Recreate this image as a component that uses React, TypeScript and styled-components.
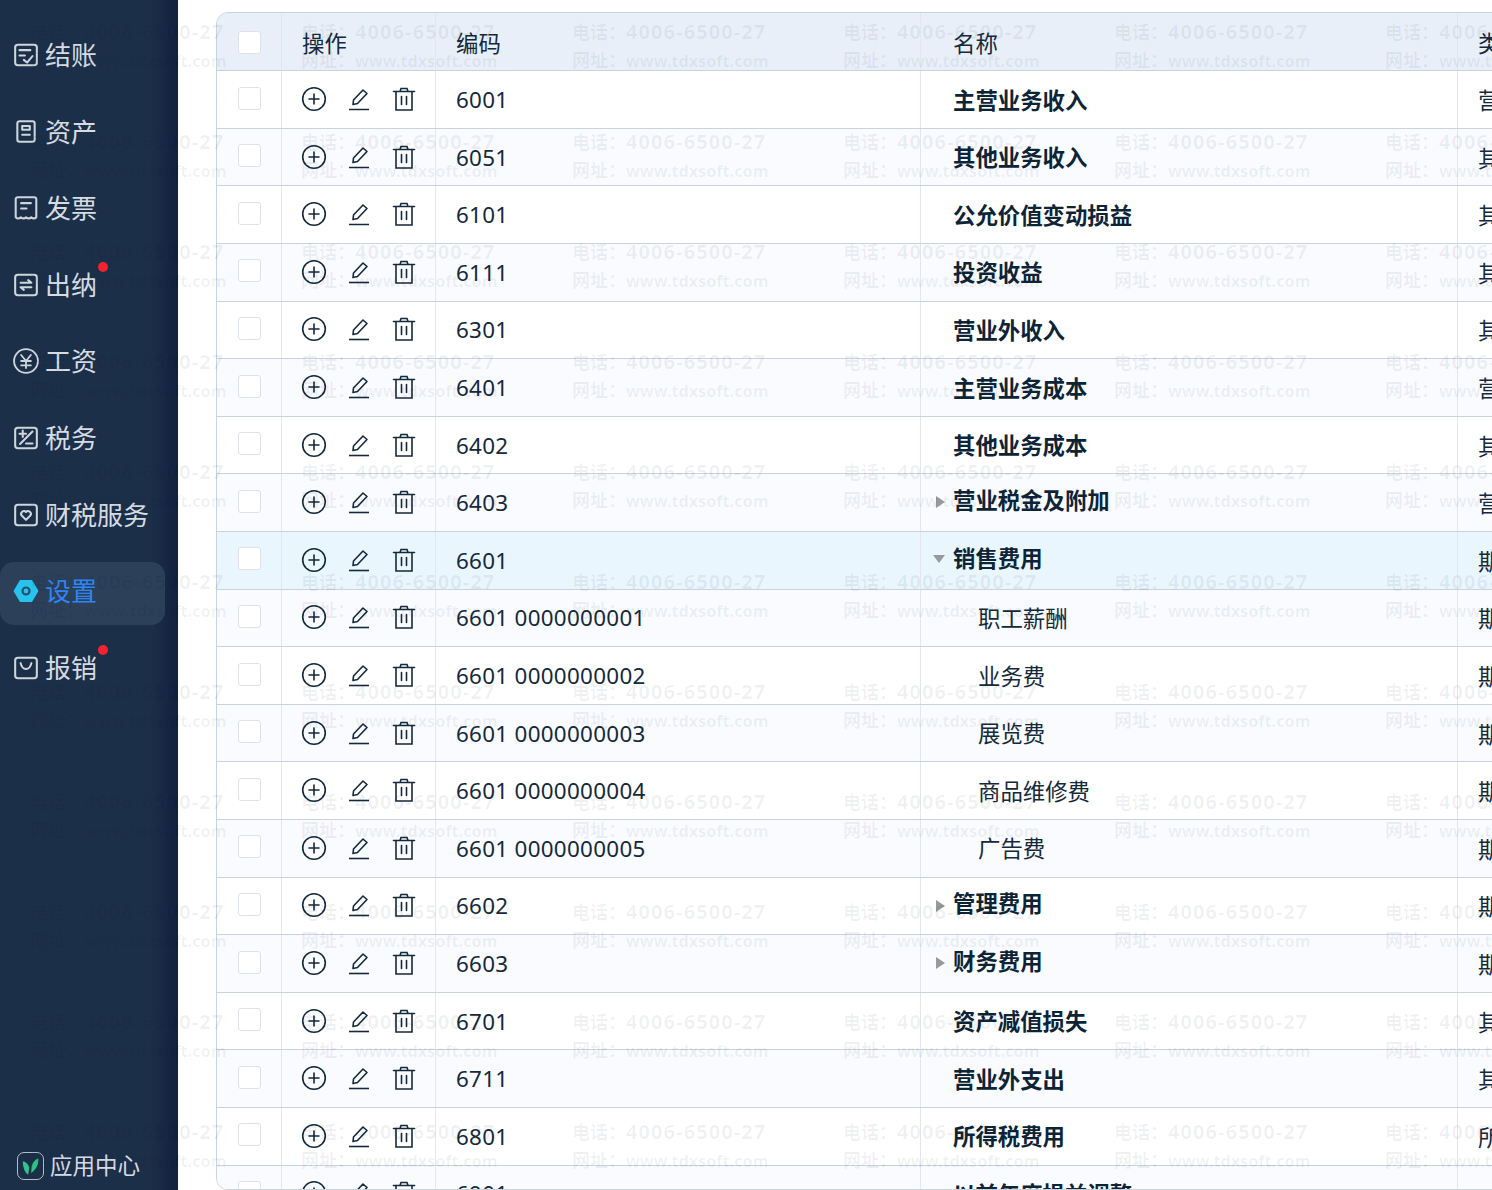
import * as React from "react"
import styled, { createGlobalStyle } from "styled-components"

type Account = {
  code: string
  name: string
  type: string
  caret?: "right" | "down"
  child?: boolean
  selected?: boolean
}

const accounts: Account[] = [
  { code: "6001", name: "主营业务收入", type: "营业收入" },
  { code: "6051", name: "其他业务收入", type: "其他收益" },
  { code: "6101", name: "公允价值变动损益", type: "其他收益" },
  { code: "6111", name: "投资收益", type: "其他收益" },
  { code: "6301", name: "营业外收入", type: "其他收益" },
  { code: "6401", name: "主营业务成本", type: "营业成本" },
  { code: "6402", name: "其他业务成本", type: "其他损失" },
  { code: "6403", name: "营业税金及附加", type: "营业税金", caret: "right" },
  { code: "6601", name: "销售费用", type: "期间费用", caret: "down", selected: true },
  { code: "6601 0000000001", name: "职工薪酬", type: "期间费用", child: true },
  { code: "6601 0000000002", name: "业务费", type: "期间费用", child: true },
  { code: "6601 0000000003", name: "展览费", type: "期间费用", child: true },
  { code: "6601 0000000004", name: "商品维修费", type: "期间费用", child: true },
  { code: "6601 0000000005", name: "广告费", type: "期间费用", child: true },
  { code: "6602", name: "管理费用", type: "期间费用", caret: "right" },
  { code: "6603", name: "财务费用", type: "期间费用", caret: "right" },
  { code: "6701", name: "资产减值损失", type: "其他损失" },
  { code: "6711", name: "营业外支出", type: "其他损失" },
  { code: "6801", name: "所得税费用", type: "所得税" },
  { code: "6901", name: "以前年度损益调整", type: "" },
]

const iconProps = {
  viewBox: "0 0.5 24 24",
  fill: "none",
  stroke: "currentColor",
  strokeWidth: 1.9,
  strokeLinecap: "round" as const,
  strokeLinejoin: "round" as const,
}

const navIcons: Record<string, React.ReactNode> = {
  close: (
    <svg {...iconProps}>
      <rect x="2" y="3" width="20" height="19" rx="2.500" />
      <path d="M6 8h10M6 13h5M10 17l3 2.500 5-6" />
    </svg>
  ),
  asset: (
    <svg {...iconProps}>
      <path d="M4 4.500A2 2 0 0 1 6 2.500h12a2 2 0 0 1 2 2v15a2 2 0 0 1-2 2H6a2 2 0 0 1-2-2z" />
      <path d="M8.500 7h7v3.500h-7zM8.500 15h7" />
    </svg>
  ),
  invoice: (
    <svg {...iconProps}>
      <path d="M2.500 21V4.500a2 2 0 0 1 2-2h15a2 2 0 0 1 2 2V21c-1.500 1.500-3 1.500-4.700 0-1.500 1.500-3.100 1.500-4.800 0-1.500 1.500-3.100 1.500-4.800 0-1.500 1.500-3.200 1.500-4.700 0z" />
      <path d="M7.500 8h9M7.500 13h5" />
    </svg>
  ),
  cash: (
    <svg {...iconProps}>
      <rect x="2" y="3" width="20" height="19" rx="2.500" />
      <path d="M7 10.500h10l-3-2.500M17 14.500H7l3 2.500" />
    </svg>
  ),
  salary: (
    <svg {...iconProps} viewBox="0 0 24 24" strokeWidth={1.7}>
      <circle cx="12" cy="12" r="11" />
      <path d="M7.500 6.500L12 12l4.500-5.500M7.500 12h9M7.500 16h9M12 12v6.500" />
    </svg>
  ),
  tax: (
    <svg {...iconProps}>
      <rect x="2" y="3" width="20" height="19" rx="2.500" />
      <path d="M6 8.500h6M9 5.500v6M18 6.500L6.500 18M12 17.500h6" />
    </svg>
  ),
  service: (
    <svg {...iconProps}>
      <rect x="2" y="3" width="20" height="19" rx="2.500" />
      <path d="M12 17l-4-4a2.600 2.600 0 0 1 4-3.300 2.600 2.600 0 0 1 4 3.300z" />
    </svg>
  ),
  settings: (
    <svg viewBox="0 0 26 26">
      <path d="M7 2h12l6.500 11L19 24H7L.5 13z" fill="#27c3ee" />
      <circle cx="13" cy="13" r="3.500" fill="none" stroke="#22506f" strokeWidth="2.200" />
    </svg>
  ),
  expense: (
    <svg {...iconProps}>
      <rect x="2" y="3" width="20" height="19" rx="2.500" />
      <path d="M7 8c1 4 3 5.500 5 5.500s4-1.500 5-5.500" />
    </svg>
  ),
}

const navItems = [
  { key: "close", label: "结账" },
  { key: "asset", label: "资产" },
  { key: "invoice", label: "发票" },
  { key: "cash", label: "出纳", dot: true },
  { key: "salary", label: "工资" },
  { key: "tax", label: "税务" },
  { key: "service", label: "财税服务" },
  { key: "settings", label: "设置", active: true },
  { key: "expense", label: "报销", dot: true },
]

const App = () => (
  <Page>
    <GlobalStyle />
    <Sidebar>
      <Nav>
        {navItems.map((item) => (
          <NavItem key={item.key} $active={item.active}>
            <NavIcon>{navIcons[item.key]}</NavIcon>
            <NavLabel>
              {item.label}
              {item.dot && <Dot />}
            </NavLabel>
          </NavItem>
        ))}
      </Nav>
      <AppCenter>
        <AppIcon>
          <svg viewBox="0 0 16 16" width="19" height="19">
            <path d="M1.500 3.500C4.500 4 6 6 7 9l-1 6C3 13 1.500 8 1.500 3.500z" fill="#2fc68c" />
            <path d="M14.500 1c.5 5-1.500 9-6 12.500L9 8c.5-3 2.500-5.500 5.500-7z" fill="#2fc68c" />
          </svg>
        </AppIcon>
        应用中心
      </AppCenter>
    </Sidebar>
    <Main>
      <Table>
        <HeaderRow>
          <CheckCell>
            <HeaderCheck />
          </CheckCell>
          <HeadCell>操作</HeadCell>
          <HeadCell>编码</HeadCell>
          <NameHead>名称</NameHead>
          <HeadCell>类型</HeadCell>
        </HeaderRow>
        {accounts.map((row, i) => (
          <Row key={row.code} $striped={i % 2 === 1} $selected={row.selected}>
            <CheckCell>
              <Check />
            </CheckCell>
            <Actions>
              <ActionIcon>
                <svg viewBox="0 0 26 26" fill="none" stroke="currentColor" strokeWidth="1.600" strokeLinecap="round">
                  <circle cx="13" cy="13" r="11.300" />
                  <path d="M8 13h10M13 8v10" />
                </svg>
              </ActionIcon>
              <ActionIcon>
                <svg viewBox="0 0 26 26" fill="none" stroke="currentColor" strokeWidth="1.600" strokeLinejoin="round">
                  <path d="M7 18.500l.5-4.500L17 4l4 3.500-9.500 10z" />
                  <path d="M3 23.500h20" />
                </svg>
              </ActionIcon>
              <ActionIcon>
                <svg viewBox="0 0 26 26" fill="none" stroke="currentColor" strokeWidth="1.600" strokeLinecap="round">
                  <path d="M2.500 5.500h21M9 5.500l1-3h6l1 3M5 5.500v18.500h16V5.500M10.500 10.500v8M15.500 10.500v8" />
                </svg>
              </ActionIcon>
            </Actions>
            <CodeCell>{row.code}</CodeCell>
            <NameCell $child={row.child} $caret={!!row.caret}>
              {row.caret && <Caret $dir={row.caret} />}
              {row.name}
            </NameCell>
            <TypeCell>{row.type}</TypeCell>
          </Row>
        ))}
      </Table>
    </Main>
    <Watermark>
      {Array.from({ length: 66 }).map((_, i) => (
        <Mark key={i}>
          <PhoneLine>
            <MarkLead>电话：</MarkLead>4006-6500-27
          </PhoneLine>
          <SiteLine>
            <MarkLead>网址：</MarkLead>www.tdxsoft.com
          </SiteLine>
        </Mark>
      ))}
    </Watermark>
  </Page>
)

export default App

const GlobalStyle = createGlobalStyle`
  html, body {
    margin: 0;
    padding: 0;
    height: 100%;
    overflow: hidden;
    background: #fff;
  }
  * {
    box-sizing: border-box;
  }
`

const Page = styled.div`
  position: relative;
  display: flex;
  width: 1492px;
  height: 1190px;
  overflow: hidden;
  font-family: "Noto Sans", "Noto Sans CJK SC", sans-serif;
`

const Sidebar = styled.aside`
  flex: 0 0 178px;
  display: flex;
  flex-direction: column;
  justify-content: space-between;
  background: linear-gradient(90deg, #1c2f48 0, #1c2f48 150px, #11213f 178px);
`

const Nav = styled.nav`
  display: flex;
  flex-direction: column;
  gap: 13.600px;
  padding-top: 26px;
`

const NavItem = styled.div<{ $active?: boolean }>`
  display: flex;
  align-items: center;
  gap: 6px;
  width: 165px;
  height: 63px;
  padding: 0 0 5px 13px;
  border-radius: 14px;
  color: ${(p) => (p.$active ? "#2f86f2" : "#d6dce2")};
  background: ${(p) => (p.$active ? "#2c405a" : "transparent")};
`

const NavIcon = styled.span`
  display: flex;
  width: 26px;
  height: 26px;
  color: #ced6dc;

  svg {
    width: 100%;
    height: 100%;
  }
`

const NavLabel = styled.span`
  position: relative;
  font-size: 26px;
  line-height: 36px;
`

const Dot = styled.i`
  position: absolute;
  top: -5px;
  right: -11px;
  width: 10px;
  height: 10px;
  border-radius: 50%;
  background: #f5222d;
`

const AppCenter = styled.div`
  display: flex;
  align-items: center;
  gap: 6px;
  height: 28px;
  margin: 0 0 10px 17px;
  font-size: 22.500px;
  line-height: 24px;
  color: #d6dce2;
`

const AppIcon = styled.span`
  display: flex;
  align-items: center;
  justify-content: center;
  width: 27px;
  height: 28px;
  border: 1.500px solid #b4bec8;
  border-radius: 7px;
`

const Main = styled.main`
  flex: 1;
  min-width: 0;
  padding: 12px 0 0 38px;
`

const Table = styled.div`
  width: 1400px;
  height: 1178px;
  overflow: hidden;
  border: 1px solid #c8d3e0;
  border-radius: 12px 0 0 12px;
`

const columns = "65px 154px 485px 537px 1fr"

const HeaderRow = styled.div`
  display: grid;
  grid-template-columns: ${columns};
  height: 58.300px;
  background: #e8eff9;
  border-bottom: 1px solid #c8d3e0;
  font-size: 22.400px;
  color: #14293b;
`

const Row = styled.div<{ $striped?: boolean; $selected?: boolean }>`
  display: grid;
  grid-template-columns: ${columns};
  height: 57.600px;
  border-bottom: 1px solid #c8d3e0;
  font-size: 22.400px;
  color: #14293b;
  background: ${(p) => (p.$selected ? "#e9f6fe" : p.$striped ? "#f9fbfe" : "#fff")};
`

const Cell = styled.div`
  display: flex;
  align-items: center;
  min-width: 0;
  white-space: nowrap;
  border-right: 1px solid #e2e7ee;
`

const CheckCell = styled(Cell)`
  justify-content: center;
  padding-bottom: 3px;
`

const Check = styled.span`
  width: 23px;
  height: 23px;
  background: #fff;
  border: 1px solid #dde2e8;
  border-radius: 3px;
`

const HeaderCheck = styled(Check)`
  margin-top: 4px;
`

const HeadCell = styled(Cell)`
  padding: 1px 0 0 20px;
`

const NameHead = styled(HeadCell)`
  padding-left: 32px;
`

const Actions = styled(Cell)`
  gap: 19px;
  padding: 0 0 1px 19px;
`

const ActionIcon = styled.span`
  display: flex;
  width: 26px;
  height: 26px;
  color: #14293b;

  svg {
    width: 100%;
    height: 100%;
  }
`

const CodeCell = styled(Cell)`
  padding-left: 20px;
  letter-spacing: 0.300px;
`

const NameCell = styled(Cell)<{ $child?: boolean; $caret?: boolean }>`
  position: relative;
  padding-left: ${(p) => (p.$child ? "57px" : "32px")};
  padding-bottom: ${(p) => (p.$caret ? "6px" : "1px")};
  font-weight: ${(p) => (p.$child ? 400 : 700)};
  color: ${(p) => (p.$child ? "#14293b" : "#0d2437")};
`

const Caret = styled.i<{ $dir: "right" | "down" }>`
  position: absolute;
  width: 0;
  height: 0;
  border-style: solid;
  ${(p) =>
    p.$dir === "right"
      ? `left: 15px; top: 22px; border-width: 6.500px 0 6.500px 9px; border-color: transparent transparent transparent #999;`
      : `left: 12px; top: 23px; border-width: 8px 6.500px 0 6.500px; border-color: #999 transparent transparent transparent;`}
`

const TypeCell = styled(Cell)`
  padding-left: 20px;
  border-right: 0;
`

const Watermark = styled.div`
  position: absolute;
  top: 17px;
  left: 30px;
  display: grid;
  grid-template-columns: repeat(6, 271px);
  grid-auto-rows: 110px;
  pointer-events: none;
`

const Mark = styled.div`
  display: flex;
  flex-direction: column;
  font-weight: 700;
  white-space: nowrap;
  color: rgba(0, 15, 40, 0.06);
`

const PhoneLine = styled.span`
  font-size: 20px;
  line-height: 30px;
  letter-spacing: 1.100px;
`

const SiteLine = styled.span`
  font-size: 16.200px;
  line-height: 27px;
`

const MarkLead = styled.span`
  font-size: 18px;
  letter-spacing: 0;
`
